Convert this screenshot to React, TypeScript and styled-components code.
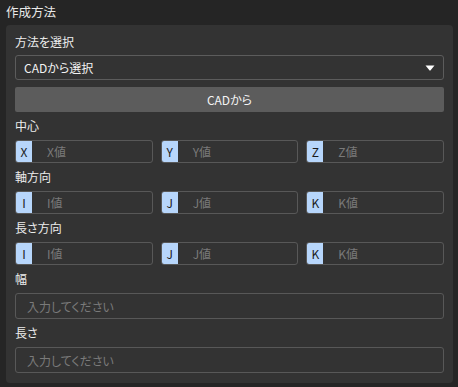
import React from 'react'
import styled, { createGlobalStyle } from 'styled-components'

const GlobalStyle = createGlobalStyle`
  html, body {
    margin: 0;
    padding: 0;
    background: #252525;
  }
  body {
    font-family: "Noto Sans CJK JP", "Noto Sans", sans-serif;
    font-size: 12px;
    font-feature-settings: "palt";
    color: #e6e6e6;
  }
`

const Page = styled.div`
  width: 458px;
  height: 387px;
  padding: 0 5px 0 6px;
  box-sizing: border-box;
  display: flex;
  flex-direction: column;
`

const Title = styled.div`
  height: 25px;
  line-height: 24px;
  font-size: 12.5px;
  color: #e8e8e8;
`

const Panel = styled.div`
  background: #333333;
  border-radius: 4px;
  padding: 8px 9px 10px 9px;
  display: flex;
  flex-direction: column;
`

const Label = styled.div<{ $first?: boolean }>`
  height: 18px;
  line-height: 18px;
  margin: ${({ $first }) => ($first ? '0 0 4px' : '5px 0 5px')};
  color: #ececec;
  font-size: 12px;
`

const SelectBox = styled.div`
  height: 25px;
  border: 1px solid #5c5c5c;
  border-radius: 3px;
  box-sizing: border-box;
  display: flex;
  align-items: center;
  justify-content: space-between;
  padding: 0 8px 0 8px;
  color: #f2f2f2;
`

const Arrow = styled.svg`
  width: 10px;
  height: 6px;
`

const Button = styled.div`
  margin-top: 7px;
  height: 25px;
  line-height: 25px;
  background: #5c5c5c;
  border-radius: 2px;
  text-align: center;
  color: #f4f4f4;
`

const Row = styled.div`
  display: grid;
  grid-template-columns: repeat(3, 1fr);
  gap: 8px;
`

const Group = styled.div`
  height: 23px;
  border: 1px solid #585858;
  border-radius: 3px;
  box-sizing: border-box;
  display: flex;
  align-items: stretch;
  overflow: hidden;
`

const Addon = styled.div`
  width: 16px;
  background: #b7d6fb;
  color: #1a1a1a;
  display: flex;
  align-items: center;
  justify-content: center;
`

const Placeholder = styled.div<{ $pad?: number }>`
  display: flex;
  align-items: center;
  padding-left: ${({ $pad }) => $pad ?? 15}px;
  color: #7a7a7a;
`

const TextInput = styled.div`
  height: 26px;
  border: 1px solid #585858;
  border-radius: 3px;
  box-sizing: border-box;
  display: flex;
`

const axes = {
  center: ['X', 'Y', 'Z'],
  axis: ['I', 'J', 'K'],
}

function AxisRow({ letters }: { letters: string[] }) {
  return (
    <Row>
      {letters.map((l) => (
        <Group key={l}>
          <Addon>{l}</Addon>
          <Placeholder>{l}値</Placeholder>
        </Group>
      ))}
    </Row>
  )
}

export default function App() {
  return (
    <>
      <GlobalStyle />
      <Page>
        <Title>作成方法</Title>
        <Panel>
          <Label $first>方法を選択</Label>
          <SelectBox>
            <span>CADから選択</span>
            <Arrow viewBox="0 0 10 6">
              <path d="M0.5 0.5 H9.5 L5.6 5.3 Q5 6 4.4 5.3 Z" fill="#ffffff" />
            </Arrow>
          </SelectBox>
          <Button>CADから</Button>
          <Label>中心</Label>
          <AxisRow letters={axes.center} />
          <Label>軸方向</Label>
          <AxisRow letters={axes.axis} />
          <Label>長さ方向</Label>
          <AxisRow letters={axes.axis} />
          <Label>幅</Label>
          <TextInput>
            <Placeholder $pad={11}>入力してください</Placeholder>
          </TextInput>
          <Label>長さ</Label>
          <TextInput>
            <Placeholder $pad={11}>入力してください</Placeholder>
          </TextInput>
        </Panel>
      </Page>
    </>
  )
}
